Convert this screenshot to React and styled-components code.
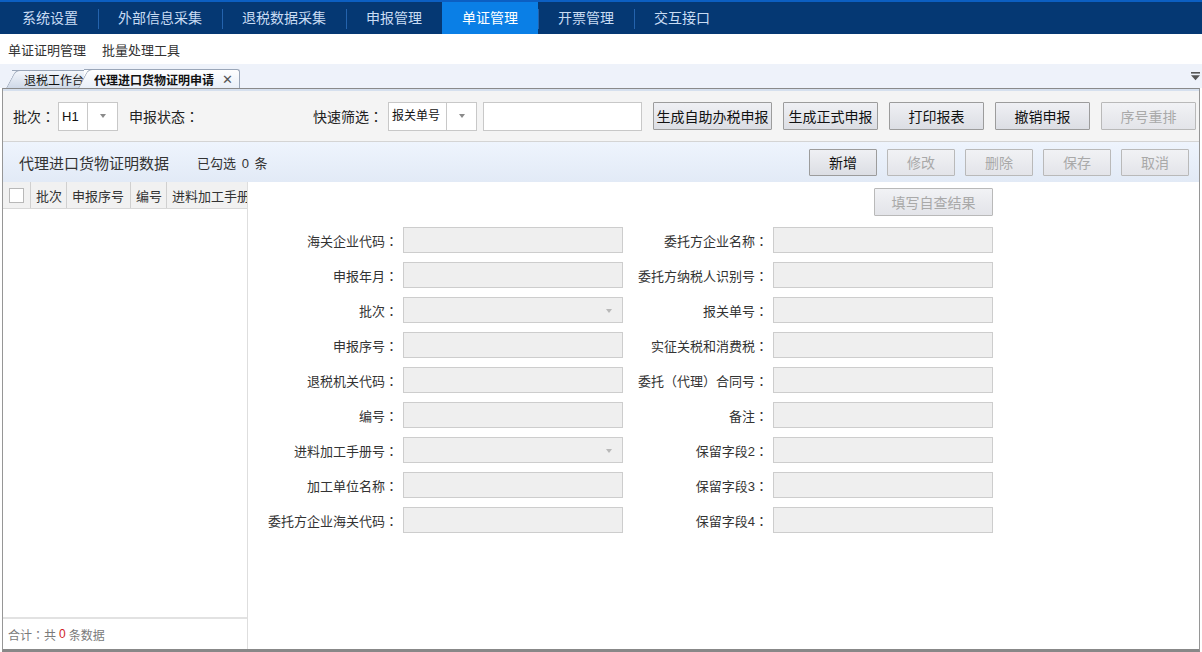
import React from "react";
import styled, { createGlobalStyle } from "styled-components";

const GlobalStyle = createGlobalStyle`
  html, body {
    margin: 0;
    padding: 0;
    height: 100%;
    overflow: hidden;
    background: #fff;
  }
  body {
    font-family: "Liberation Sans", "Noto Sans CJK SC", sans-serif;
    color: #333;
  }
  * {
    box-sizing: border-box;
  }
`;

const Page = styled.div`
  width: 1202px;
  height: 652px;
  display: flex;
  flex-direction: column;
  background: #fff;
`;

/* ---------- top navigation ---------- */
const TopNav = styled.nav`
  height: 34px;
  flex-shrink: 0;
  display: flex;
  padding-left: 2px;
  background: #053873;
  border-top: 2px solid #0c5fc2;
`;

const NavItem = styled.div`
  position: relative;
  height: 32px;
  padding: 0 20px;
  line-height: 32px;
  font-size: 14px;
  white-space: nowrap;
  color: ${(p) => (p.$active ? "#fff" : "#c9dcf3")};
  background: ${(p) => (p.$active ? "#0a7fe6" : "transparent")};

  &::before {
    content: "";
    display: ${(p) => (p.$first || p.$active ? "none" : "block")};
    position: absolute;
    left: 0;
    top: 7px;
    bottom: 5px;
    width: 1px;
    background: #2463ad;
  }
`;

const SubMenu = styled.div`
  height: 30px;
  flex-shrink: 0;
  display: flex;
  align-items: center;
  gap: 16px;
  padding-left: 8px;
  font-size: 13px;
  color: #333;
`;

/* ---------- tab strip ---------- */
const TabStrip = styled.div`
  height: 24px;
  flex-shrink: 0;
  display: flex;
  align-items: flex-end;
  padding-left: 12px;
  background: #eef2fa;
`;

const Tab = styled.div`
  position: relative;
  height: ${(p) => (p.$active ? 19 : 18)}px;
  margin-left: ${(p) => (p.$active ? -4 : 0)}px;
  padding: 0 ${(p) => (p.$active ? 6 : 0)}px 0 ${(p) => (p.$active ? 10 : 12)}px;
  width: ${(p) => (p.$active ? "auto" : "76px")};
  display: flex;
  align-items: center;
  gap: 8px;
  font-size: 12px;
  font-weight: ${(p) => (p.$active ? 700 : 400)};
  color: #111;
  white-space: nowrap;
  z-index: ${(p) => (p.$active ? 2 : 1)};
  background: ${(p) =>
    p.$active
      ? "linear-gradient(#ffffff, #e9eff8)"
      : "linear-gradient(#f3f6fb, #cfd9e8)"};
  border: 1px solid #9aa6b8;
  border-bottom: none;
  border-left: none;
  border-radius: 0 3px 0 0;

  &::before {
    content: "";
    position: absolute;
    left: -6px;
    top: -1px;
    bottom: 0;
    width: 14px;
    transform: skewX(-28deg);
    transform-origin: bottom left;
    background: inherit;
    border-left: 1px solid #9aa6b8;
    border-top: 1px solid #9aa6b8;
    border-radius: 5px 0 0 0;
    z-index: -1;
  }
`;

const TabLabel = styled.span`
  overflow: hidden;
  position: relative;
`;

const TabClose = styled.span`
  font-size: 13px;
  font-weight: 400;
  color: #555;
  line-height: 1;
`;

const StripMenu = styled.svg`
  margin-left: auto;
  margin-right: 2px;
  align-self: center;
`;

/* ---------- main panel ---------- */
const Panel = styled.div`
  flex: 1;
  min-height: 0;
  margin: 0 2px;
  display: flex;
  flex-direction: column;
  border: 1px solid #969696;
  border-top-color: #8a8a8a;
  border-bottom: 3px solid #888;
`;

const Toolbar = styled.div`
  height: 53px;
  flex-shrink: 0;
  display: flex;
  align-items: center;
  padding-left: 10px;
  background: #f4f4f4;
  border-top: 2px solid #d6e0ee;
  border-bottom: 1px solid #d4d4d4;
`;

const ToolLabel = styled.span`
  margin-left: ${(p) => p.$ml || 0}px;
  font-size: 14px;
  color: #222;
  white-space: nowrap;
`;

/* full-width colon drawn centred, as in the original UI font */
const Colon = styled.span`
  font-family: "Noto Sans CJK TC", "Noto Sans CJK SC", sans-serif;
`;

const withColon = (text) => {
  if (!text.endsWith("：")) return text;
  return (
    <>
      {text.slice(0, -1)}
      <Colon>：</Colon>
    </>
  );
};

const Select = styled.div`
  display: flex;
  width: ${(p) => p.$w}px;
  height: 29px;
  margin-left: ${(p) => p.$ml || 0}px;
  background: #fff;
  border: 1px solid #c8c8c8;
`;

const SelectText = styled.span`
  flex: 1;
  padding-left: 3px;
  font-size: ${(p) => p.$size || 13}px;
  line-height: 27px;
  color: #111;
`;

const SelectArrow = styled.span`
  width: 30px;
  display: flex;
  align-items: center;
  justify-content: center;
  border-left: 1px solid #c8c8c8;

  &::after {
    content: "";
    border-left: 3.5px solid transparent;
    border-right: 3.5px solid transparent;
    border-top: 4px solid #8a8a8a;
  }
`;

const SearchInput = styled.div`
  width: 159px;
  height: 29px;
  margin-left: ${(p) => p.$ml || 0}px;
  background: #fff;
  border: 1px solid #c8c8c8;
`;

const Btn = styled.button`
  width: ${(p) => p.$w}px;
  height: ${(p) => p.$h || 28}px;
  margin-left: ${(p) => p.$ml || 0}px;
  padding: 0;
  flex-shrink: 0;
  font-family: inherit;
  font-size: 14px;
  white-space: nowrap;
  color: ${(p) => (p.disabled ? "#a9a9a9" : "#111")};
  background: ${(p) =>
    p.disabled
      ? "linear-gradient(#f1f2f5, #e3e4e9)"
      : "linear-gradient(#eff0f4, #dcdee4)"};
  border: 1px solid ${(p) => (p.disabled ? "#b9b9b9" : "#9c9c9c")};
  border-radius: 1px;
`;

const SectionHeader = styled.div`
  height: 40px;
  flex-shrink: 0;
  display: flex;
  align-items: center;
  padding: 0 10px 0 16px;
  background: linear-gradient(#eef4fd, #e2eaf6);
`;

const SectionTitle = styled.span`
  font-size: 15px;
  color: #333;
`;

const Picked = styled.span`
  margin-left: 28px;
  font-size: 13px;
  color: #333;
  word-spacing: 2px;
`;

const ActionGroup = styled.div`
  margin-left: auto;
  display: flex;
  gap: 10px;
`;

/* ---------- body ---------- */
const Body = styled.div`
  flex: 1;
  min-height: 0;
  display: flex;
`;

const GridBox = styled.div`
  width: 245px;
  flex-shrink: 0;
  display: flex;
  flex-direction: column;
  border-right: 1px solid #dedede;
  overflow: hidden;
`;

const GridHead = styled.div`
  height: 27px;
  display: flex;
  background: #f1f1f1;
  border-bottom: 1px solid #d8d8d8;
`;

const HeadCell = styled.div`
  width: ${(p) => p.$w}px;
  flex-shrink: 0;
  display: flex;
  align-items: center;
  justify-content: ${(p) => (p.$center ? "center" : "flex-start")};
  padding-left: ${(p) => (p.$center ? 0 : 5)}px;
  font-size: 13px;
  color: #333;
  white-space: nowrap;
  border-right: 1px solid #d0d0d0;
`;

const CheckBox = styled.span`
  width: 15px;
  height: 15px;
  background: #fff;
  border: 1px solid #b8b8b8;
`;

const GridRows = styled.div`
  flex: 1;
`;

const GridFooter = styled.div`
  height: 32px;
  display: flex;
  align-items: center;
  padding-left: 5px;
  font-size: 12px;
  color: #7a7a7a;
  border-top: 2px solid #e2e2e2;
`;

const Red = styled.span`
  color: #d01c1c;
  margin: 0 3px;
`;

const FormArea = styled.div`
  flex: 1;
  display: flex;
  flex-direction: column;
  padding-top: 6px;
`;

const FormTop = styled.div`
  width: 745px;
  display: flex;
  justify-content: flex-end;
`;

const FormGrid = styled.div`
  width: 745px;
  margin-top: 11px;
  display: grid;
  grid-template-columns: 155px 220px 150px 220px;
  grid-auto-rows: 26px;
  row-gap: 9px;
`;

const FieldLabel = styled.label`
  display: flex;
  align-items: center;
  justify-content: flex-end;
  padding-right: 5px;
  font-size: 13px;
  color: #333;
  white-space: nowrap;
`;

const FieldBox = styled.div`
  position: relative;
  background: #efefef;
  border: 1px solid #cdcdcd;

  &::after {
    content: "";
    display: ${(p) => (p.$dropdown ? "block" : "none")};
    position: absolute;
    right: 10px;
    top: 11px;
    border-left: 3.5px solid transparent;
    border-right: 3.5px solid transparent;
    border-top: 4px solid #b8b8b8;
  }
`;

const navItems = ["系统设置", "外部信息采集", "退税数据采集", "申报管理", "单证管理", "开票管理", "交互接口"];

const gridCols = [
  { label: "批次", w: 36 },
  { label: "申报序号", w: 64 },
  { label: "编号", w: 36 },
  { label: "进料加工手册号", w: 110 },
];

const fields = [
  ["海关企业代码：", false, "委托方企业名称：", false],
  ["申报年月：", false, "委托方纳税人识别号：", false],
  ["批次：", true, "报关单号：", false],
  ["申报序号：", false, "实征关税和消费税：", false],
  ["退税机关代码：", false, "委托（代理）合同号：", false],
  ["编号：", false, "备注：", false],
  ["进料加工手册号：", true, "保留字段2：", false],
  ["加工单位名称：", false, "保留字段3：", false],
  ["委托方企业海关代码：", false, "保留字段4：", false],
];

const App = () => {
  return (
    <Page>
      <GlobalStyle />
      <TopNav>
        {navItems.map((item, i) => (
          <NavItem key={item} $first={i === 0} $active={item === "单证管理"}>
            {item}
          </NavItem>
        ))}
      </TopNav>

      <SubMenu>
        <span>单证证明管理</span>
        <span>批量处理工具</span>
      </SubMenu>

      <TabStrip>
        <Tab>
          <TabLabel>退税工作台</TabLabel>
        </Tab>
        <Tab $active>
          <TabLabel>代理进口货物证明申请</TabLabel>
          <TabClose>✕</TabClose>
        </Tab>
        <StripMenu width="9" height="9" viewBox="0 0 9 9">
          <rect x="0" y="0" width="9" height="1.6" fill="#555" />
          <path d="M0 3.2 H9 L4.5 8.2 Z" fill="#555" />
        </StripMenu>
      </TabStrip>

      <Panel>
        <Toolbar>
          <ToolLabel>{withColon("批次：")}</ToolLabel>
          <Select $w={60} $ml={3}>
            <SelectText>H1</SelectText>
            <SelectArrow />
          </Select>
          <ToolLabel $ml={11}>{withColon("申报状态：")}</ToolLabel>
          <ToolLabel $ml={114}>{withColon("快速筛选：")}</ToolLabel>
          <Select $w={89} $ml={5}>
            <SelectText $size={12}>报关单号</SelectText>
            <SelectArrow />
          </Select>
          <SearchInput $ml={6} />
          <Btn $w={119} $ml={11}>生成自助办税申报</Btn>
          <Btn $w={95} $ml={11}>生成正式申报</Btn>
          <Btn $w={95} $ml={11}>打印报表</Btn>
          <Btn $w={95} $ml={11}>撤销申报</Btn>
          <Btn $w={95} $ml={11} disabled>序号重排</Btn>
        </Toolbar>

        <SectionHeader>
          <SectionTitle>代理进口货物证明数据</SectionTitle>
          <Picked>已勾选 0 条</Picked>
          <ActionGroup>
            <Btn $w={68} $h={27}>新增</Btn>
            <Btn $w={68} $h={27} disabled>修改</Btn>
            <Btn $w={68} $h={27} disabled>删除</Btn>
            <Btn $w={68} $h={27} disabled>保存</Btn>
            <Btn $w={68} $h={27} disabled>取消</Btn>
          </ActionGroup>
        </SectionHeader>

        <Body>
          <GridBox>
            <GridHead>
              <HeadCell $w={28} $center>
                <CheckBox />
              </HeadCell>
              {gridCols.map((c) => (
                <HeadCell key={c.label} $w={c.w}>
                  {c.label}
                </HeadCell>
              ))}
            </GridHead>
            <GridRows />
            <GridFooter>
              合计<Colon>：</Colon>共<Red>0</Red>条数据
            </GridFooter>
          </GridBox>

          <FormArea>
            <FormTop>
              <Btn $w={119} disabled>填写自查结果</Btn>
            </FormTop>
            <FormGrid>
              {fields.map(([l1, d1, l2, d2]) => (
                <React.Fragment key={l1}>
                  <FieldLabel>{withColon(l1)}</FieldLabel>
                  <FieldBox $dropdown={d1} />
                  <FieldLabel>{withColon(l2)}</FieldLabel>
                  <FieldBox $dropdown={d2} />
                </React.Fragment>
              ))}
            </FormGrid>
          </FormArea>
        </Body>
      </Panel>
    </Page>
  );
};

export default App;
